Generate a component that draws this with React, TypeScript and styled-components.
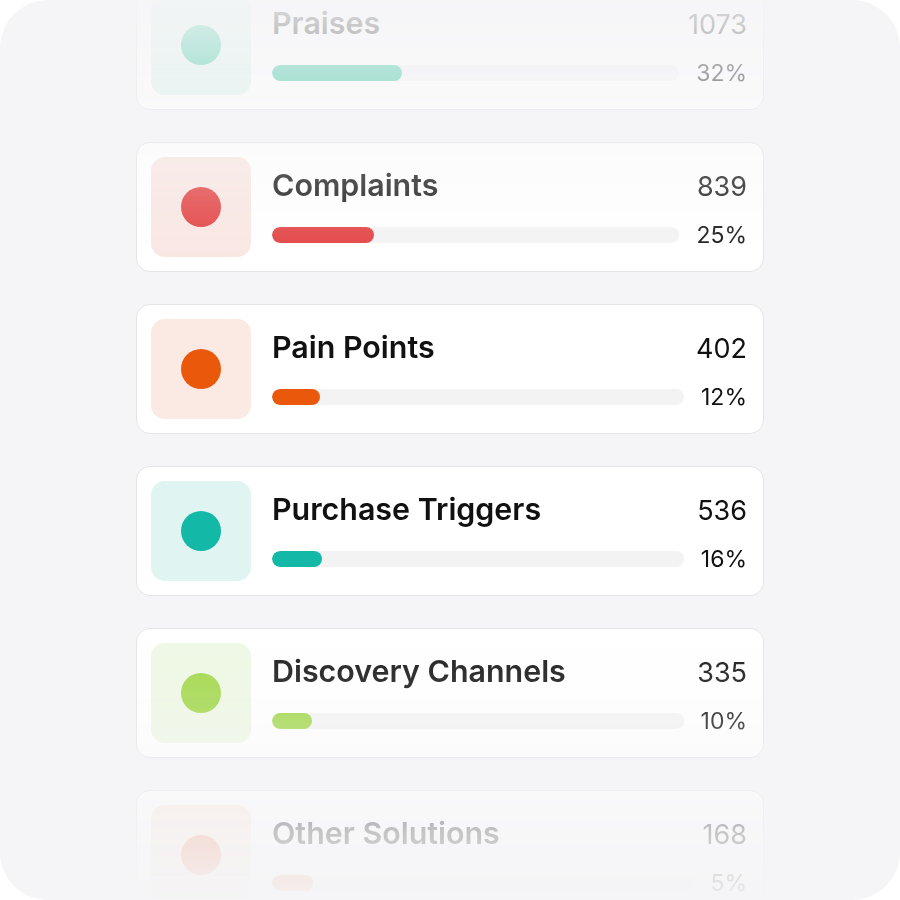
import React from "react";
import styled, { createGlobalStyle } from "styled-components";

const GlobalStyle = createGlobalStyle`
  html, body {
    margin: 0;
    padding: 0;
    background: #ffffff;
  }
  body {
    font-family: Inter, "Noto Sans", sans-serif;
  }
`;

const Frame = styled.div`
  width: 900px;
  height: 900px;
  border-radius: 48px;
  background-color: #f5f5f7;
  overflow: hidden;
`;

// top and bottom cards fade out into the frame
const fade = `linear-gradient(
  to bottom,
  rgba(0, 0, 0, 0.1) 20px,
  rgba(0, 0, 0, 0.35) 90px,
  rgba(0, 0, 0, 0.72) 200px,
  #000 290px,
  #000 620px,
  rgba(0, 0, 0, 0.8) 730px,
  rgba(0, 0, 0, 0.22) 850px,
  rgba(0, 0, 0, 0.04) 920px
)`;

const List = styled.div`
  display: flex;
  flex-direction: column;
  gap: 32px;
  width: 628px;
  margin: -20px 0 0 136px;
  -webkit-mask-image: ${fade};
  mask-image: ${fade};
`;

const Card = styled.div`
  display: flex;
  align-items: stretch;
  gap: 21px;
  box-sizing: border-box;
  height: 130px;
  padding: 14px 16px 14px 14px;
  background-color: #ffffff;
  border: 1.5px solid #e4e4e7;
  border-radius: 14px;
`;

const IconBox = styled.div<{ $tint: string }>`
  flex: 0 0 100px;
  height: 100px;
  border-radius: 14px;
  background-color: ${(p) => p.$tint};
  display: flex;
  align-items: center;
  justify-content: center;
`;

const Dot = styled.div<{ $color: string }>`
  width: 40px;
  height: 40px;
  border-radius: 50%;
  background-color: ${(p) => p.$color};
`;

const Body = styled.div`
  flex: 1;
  display: flex;
  flex-direction: column;
  gap: 17px;
  padding-top: 10px;
`;

const TopRow = styled.div`
  display: flex;
  align-items: baseline;
  justify-content: space-between;
  height: 36px;
`;

const Title = styled.span`
  font-size: 30.4px;
  line-height: 36px;
  font-weight: 600;
  color: #111111;
`;

const Count = styled.span`
  font-size: 27px;
  line-height: 36px;
  font-weight: 400;
  color: #111111;
`;

const BottomRow = styled.div`
  display: flex;
  align-items: center;
  gap: 17px;
  height: 30px;
`;

const Track = styled.div`
  flex: 1;
  height: 16px;
  border-radius: 8px;
  background-color: #f3f3f3;
  overflow: hidden;
`;

const Fill = styled.div<{ $color: string }>`
  height: 100%;
  border-radius: 8px;
  background-color: ${(p) => p.$color};
`;

const Percent = styled.span`
  font-size: 23px;
  line-height: 30px;
  font-weight: 400;
  color: #111111;
`;

type Item = {
  name: string;
  count: number;
  pct: number;
  fill: number;
  color: string;
  tint: string;
};

const items: Item[] = [
  { name: "Praises", count: 1073, pct: 32, fill: 31.9, color: "#34c39a", tint: "#dcf3ec" },
  { name: "Complaints", count: 839, pct: 25, fill: 25, color: "#e23d3d", tint: "#f9e6e1" },
  { name: "Pain Points", count: 402, pct: 12, fill: 11.7, color: "#ea580c", tint: "#fbe9e3" },
  { name: "Purchase Triggers", count: 536, pct: 16, fill: 12.1, color: "#14b8a6", tint: "#e0f5f2" },
  { name: "Discovery Channels", count: 335, pct: 10, fill: 9.7, color: "#9fd645", tint: "#eef7e3" },
  { name: "Other Solutions", count: 168, pct: 5, fill: 9.7, color: "#f08a60", tint: "#fce8dc" },
];

const App: React.FC = () => {
  return (
    <>
      <GlobalStyle />
      <Frame>
        <List>
          {items.map((item) => (
            <Card key={item.name}>
              <IconBox $tint={item.tint}>
                <Dot $color={item.color} />
              </IconBox>
              <Body>
                <TopRow>
                  <Title>{item.name}</Title>
                  <Count>{item.count}</Count>
                </TopRow>
                <BottomRow>
                  <Track>
                    <Fill $color={item.color} style={{ width: `${item.fill}%` }} />
                  </Track>
                  <Percent>{item.pct}%</Percent>
                </BottomRow>
              </Body>
            </Card>
          ))}
        </List>
      </Frame>
    </>
  );
};

export default App;
